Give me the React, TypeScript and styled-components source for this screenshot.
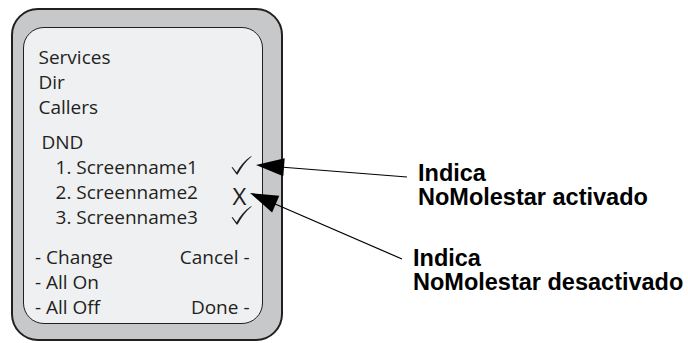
import React from "react";
import styled, { createGlobalStyle } from "styled-components";

const Global = createGlobalStyle`
  html, body { margin: 0; padding: 0; background: #ffffff; }
  #root { width: 688px; height: 343px; }
`;

const Stage = styled.div`
  position: relative;
  width: 688px;
  height: 343px;
  box-sizing: border-box;
  padding: 8px 0 0 11px;
  display: flex;
  align-items: flex-start;
  overflow: hidden;
`;

const Phone = styled.div`
  width: 272px;
  height: 333px;
  box-sizing: border-box;
  border: 2px solid #231f20;
  border-radius: 27px;
  background: #c7c8ca;
  padding: 17px 18px 15px 10px;
  display: flex;
`;

const Screen = styled.div`
  flex: 1;
  box-sizing: border-box;
  border: 1.5px solid #231f20;
  border-radius: 21px;
  background: #eff0f2;
  display: flex;
  flex-direction: column;
  font-family: "Open Sans", "Noto Sans", sans-serif;
  font-size: 19px;
  line-height: 25px;
  color: #231f20;
  padding-top: 16.5px;
`;

const Menu = styled.div`
  display: flex;
  flex-direction: column;
  padding-left: 14.5px;
`;

const MenuLine = styled.div`
  height: 25px;
  white-space: nowrap;
`;

const Section = styled.div`
  margin-top: 10px;
  padding-left: 3px;
  white-space: nowrap;
  height: 25px;
`;

const List = styled.div`
  display: flex;
  flex-direction: column;
  padding-left: 31.5px;
  padding-right: 10px;
`;

const Item = styled.div`
  display: grid;
  grid-template-columns: 1fr 22px;
  height: 25px;
  white-space: nowrap;
`;

const Mark = styled.div`
  display: flex;
  justify-content: flex-start;
  align-items: flex-start;
`;

const CheckSvg = styled.svg`
  display: block;
  margin-top: 1px;
  margin-left: 1px;
`;

const Cross = styled.span`
  font-size: 24px;
  line-height: 25px;
  margin-top: 3.5px;
  margin-left: 2.5px;
  font-weight: 400;
`;

const SoftKeys = styled.div`
  margin-top: 15px;
  display: grid;
  grid-template-columns: 1fr auto;
  grid-auto-rows: 25px;
  padding: 0 12.5px 0 11px;
  white-space: nowrap;
`;

const KeyRight = styled.span`
  text-align: right;
`;

const Labels = styled.div`
  margin-left: 130px;
  padding-top: 152.9px;
  display: flex;
  flex-direction: column;
  gap: 36.7px;
  font-family: "Liberation Sans", Arial, sans-serif;
  font-weight: 700;
  font-size: 23.5px;
  line-height: 24px;
  color: #000000;
`;

const Label = styled.div<{ $indent: number }>`
  margin-left: ${(p) => p.$indent}px;
  display: flex;
  flex-direction: column;
`;

const LabelLine = styled.div`
  height: 24px;
  white-space: nowrap;
`;

const Overlay = styled.svg`
  position: absolute;
  left: 0;
  top: 0;
  pointer-events: none;
`;

const Check = () => (
  <CheckSvg width="21" height="19" viewBox="0 0 21 19">
    <path
      d="M0.6 11.6 L1.5 11 L5.6 16.2 C9 10 13.5 4.6 20.2 0 L20.6 0.5 C14.6 5.6 10.4 11.4 6.6 18.6 L5.6 18.6 Z"
      fill="#231f20"
    />
  </CheckSvg>
);

const items: { n: number; on: boolean }[] = [
  { n: 1, on: true },
  { n: 2, on: false },
  { n: 3, on: true },
];

export default function App() {
  return (
    <>
      <Global />
      <Stage>
        <Phone>
          <Screen>
            <Menu>
              <MenuLine>Services</MenuLine>
              <MenuLine>Dir</MenuLine>
              <MenuLine>Callers</MenuLine>
            </Menu>
            <Menu>
              <Section>DND</Section>
            </Menu>
            <List>
              {items.map((it) => (
                <Item key={it.n}>
                  <span>
                    {it.n}. Screenname{it.n}
                  </span>
                  <Mark>{it.on ? <Check /> : <Cross>X</Cross>}</Mark>
                </Item>
              ))}
            </List>
            <SoftKeys>
              <span>- Change</span>
              <KeyRight>Cancel -</KeyRight>
              <span>- All On</span>
              <KeyRight></KeyRight>
              <span>- All Off</span>
              <KeyRight>Done -</KeyRight>
            </SoftKeys>
          </Screen>
        </Phone>
        <Labels>
          <Label $indent={5}>
            <LabelLine>Indica</LabelLine>
            <LabelLine>NoMolestar activado</LabelLine>
          </Label>
          <Label $indent={0}>
            <LabelLine>Indica</LabelLine>
            <LabelLine>NoMolestar desactivado</LabelLine>
          </Label>
        </Labels>
        <Overlay width="688" height="343" viewBox="0 0 688 343">
          <line x1="280" y1="167" x2="407" y2="177" stroke="#000" strokeWidth="1.2" />
          <polygon points="256,165 284.7,158.2 283.3,176.2" fill="#000" />
          <line x1="274" y1="203.5" x2="402" y2="259" stroke="#000" strokeWidth="1.2" />
          <polygon points="250,193 279.3,195.8 272.1,212.4" fill="#000" />
        </Overlay>
      </Stage>
    </>
  );
}
